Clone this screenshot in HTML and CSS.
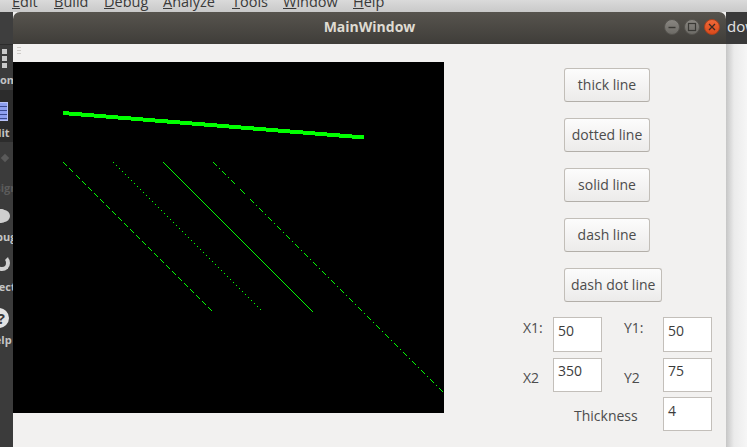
FILE: index.html
```html
<!DOCTYPE html>
<html>
<head>
<meta charset="utf-8">
<title>MainWindow</title>
<link rel="stylesheet" href="styles.css">
</head>
<body>
<div class="menubar">
  <span class="mi w-edit"><u>E</u>dit</span>
  <span class="mi w-build"><u>B</u>uild</span>
  <span class="mi w-debug"><u>D</u>ebug</span>
  <span class="mi w-analyze"><u>A</u>nalyze</span>
  <span class="mi w-tools"><u>T</u>ools</span>
  <span class="mi w-window"><u>W</u>indow</span>
  <span class="mi"><u>H</u>elp</span>
</div>
<div class="main">
  <div class="strip">
    <div class="strip-top"></div>
    <div class="sq sq-first"></div>
    <div class="sq"></div>
    <div class="sq"></div>
    <div class="mlbl lbl-welcome">Welcome</div>
    <div class="sel">
      <div class="edit-icon"></div>
      <div class="mlbl lbl-edit">Edit</div>
    </div>
    <div class="diamond"></div>
    <div class="mlbl dim lbl-design">Design</div>
    <div class="bug"></div>
    <div class="mlbl lbl-debug">Debug</div>
    <div class="wrench"></div>
    <div class="mlbl lbl-projects">Projects</div>
    <div class="help-ico">?</div>
    <div class="mlbl lbl-help">Help</div>
  </div>
  <div class="window">
    <div class="titlebar">
      <div></div>
      <div class="title">MainWindow</div>
      <div class="wbtns">
        <svg width="56" height="16" viewBox="0 0 56 16">
          <defs>
            <linearGradient id="gg" x1="0" y1="0" x2="0" y2="1">
              <stop offset="0" stop-color="#8a8782"/>
              <stop offset="1" stop-color="#6c6a65"/>
            </linearGradient>
            <linearGradient id="og" x1="0" y1="0" x2="0" y2="1">
              <stop offset="0" stop-color="#f06a3a"/>
              <stop offset="1" stop-color="#d9491a"/>
            </linearGradient>
          </defs>
          <circle cx="8" cy="8" r="7.5" fill="url(#gg)" stroke="#55534e" stroke-width="1"/>
          <line x1="4.5" y1="8.5" x2="11.5" y2="8.5" stroke="#3a3935" stroke-width="1.4"/>
          <circle cx="28" cy="8" r="7.5" fill="url(#gg)" stroke="#55534e" stroke-width="1"/>
          <rect x="24.5" y="4.5" width="7" height="7" fill="none" stroke="#3a3935" stroke-width="1.2"/>
          <circle cx="48" cy="8" r="7.5" fill="url(#og)" stroke="#a8401c" stroke-width="1"/>
          <path d="M45 5 L51 11 M51 5 L45 11" stroke="#3a2a22" stroke-width="1.3"/>
        </svg>
      </div>
    </div>
    <div class="body">
      <div class="toolbar"><div class="grip"></div></div>
      <div class="row">
        <svg class="canvas" width="431" height="351" viewBox="0 0 431 351">
          <rect width="431" height="351" fill="#000"/>
          <line x1="50" y1="51" x2="351" y2="75.5" stroke="#00ff00" stroke-width="4" shape-rendering="crispEdges"/>
          <g stroke="#00ff00" stroke-width="1" shape-rendering="crispEdges" fill="none">
            <line x1="50.5" y1="100.5" x2="200.5" y2="250.5" stroke-dasharray="5.66 2.83"/>
            <line x1="100.5" y1="100.5" x2="250.5" y2="250.5" stroke-dasharray="1.41 2.83"/>
            <line x1="150.5" y1="100.5" x2="300.5" y2="250.5"/>
            <line x1="200.5" y1="100.5" x2="500.5" y2="400.5" stroke-dasharray="5.66 2.83 1.41 2.83"/>
          </g>
        </svg>
        <div class="panel">
          <button class="btn">thick line</button>
          <button class="btn">dotted line</button>
          <button class="btn">solid line</button>
          <button class="btn">dash line</button>
          <button class="btn">dash dot line</button>
          <div class="form">
            <div class="lab lab-r1">X1:</div>
            <div class="inp">50</div>
            <div class="lab lab-r1 lab-y">Y1:</div>
            <div class="inp">50</div>
            <div class="lab lab-r2">X2</div>
            <div class="inp">350</div>
            <div class="lab lab-r2 lab-y">Y2</div>
            <div class="inp">75</div>
            <div class="lab lab-thick">Thickness</div>
            <div class="inp inp-thick">4</div>
          </div>
        </div>
      </div>
    </div>
  </div>
  <div class="side">
    <div class="side-top">dow</div>
    <div class="side-rest"></div>
  </div>
</div>
</body>
</html>
```
FILE: styles.css
```css
* { box-sizing: border-box; }
html, body {
  margin: 0;
  padding: 0;
  width: 747px;
  height: 447px;
  overflow: hidden;
  background: #f2f1f0;
  font-family: "Open Sans", "DejaVu Sans", sans-serif;
}

/* top menu bar of the background app */
.menubar {
  height: 12px;
  overflow: hidden;
  display: flex;
  padding-left: 12px;
  background: linear-gradient(#dadada, #c9c9c9);
  color: #3a3a3a;
  font-size: 14.5px;
  line-height: 16px;
}
.mi { display: block; margin-top: -6px; white-space: nowrap; flex: none; }
.mi u { text-underline-offset: 1px; }
.w-edit { width: 42px; }
.w-build { width: 50px; }
.w-debug { width: 59px; }
.w-analyze { width: 69px; }
.w-tools { width: 51px; }
.w-window { width: 70px; }

.main { display: flex; height: 435px; }

/* left mode strip */
.strip {
  width: 13px;
  flex: none;
  background: #3b3b3b;
  overflow: hidden;
  display: flex;
  flex-direction: column;
}
.strip > * { flex: none; }
.strip-top { height: 33px; background: #3e3e3e; border-bottom: 1px solid #2c2c2c; }
.sq { width: 5px; height: 5px; background: #c9c9c9; margin: 0 0 2px 2px; }
.sq-first { margin-top: 4px; }
.mlbl {
  width: 80px;
  margin-left: -41px;
  text-align: center;
  font-size: 11px;
  font-weight: bold;
  line-height: 12px;
  height: 12px;
  color: #c4c4c4;
  white-space: nowrap;
}
.mlbl.dim { color: #5c5c5c; }
.lbl-welcome { margin-top: 4px; }
.sel { height: 52px; margin-top: 4px; background: #2c2c2c; padding-top: 12px; }
.edit-icon {
  width: 8px;
  height: 19px;
  background: repeating-linear-gradient(#8d9ff0 0, #8d9ff0 3px, #3a4a90 3px, #3a4a90 4px);
  border: 1px solid #b8c2f7;
  border-left: none;
}
.lbl-edit { margin-top: 6px; }
.diamond {
  width: 6px;
  height: 6px;
  margin: 13px 0 0 2px;
  background: #5a5a5a;
  transform: rotate(45deg);
}
.lbl-design { margin-top: 21px; }
.bug {
  width: 14px;
  height: 14px;
  margin: 15px 0 0 -6px;
  border-radius: 50%;
  background: #cfcfcf;
  box-shadow: 0 -4px 0 -4px #cfcfcf, 3px 0 0 -1px #cfcfcf;
}
.lbl-debug { margin-top: 8px; }
.wrench {
  width: 16px;
  height: 16px;
  margin: 12px 0 0 -6px;
  border-radius: 50%;
  border: 4px solid #d0d0d0;
  border-top-color: transparent;
}
.lbl-projects { margin-top: 10px; }
.help-ico {
  width: 20px;
  height: 20px;
  margin: 15px 0 0 -11px;
  border-radius: 50%;
  background: #e2e2e2;
  color: #3b3b3b;
  font-size: 15px;
  font-weight: bold;
  line-height: 20px;
  text-align: right;
  padding-right: 4px;
}
.lbl-help { margin-top: 6px; }

/* the application window */
.window {
  width: 713px;
  flex: none;
  display: flex;
  flex-direction: column;
}
.titlebar {
  height: 32px;
  flex: none;
  border-radius: 7px 7px 0 0;
  background: linear-gradient(#57544e, #3f3d39);
  display: grid;
  grid-template-columns: 1fr auto 1fr;
  align-items: center;
}
.title {
  color: #dfdbd2;
  font-weight: bold;
  font-size: 14px;
  line-height: 30px;
  height: 32px;
}
.wbtns { justify-self: end; padding-right: 6px; height: 16px; margin-top: -2px; }
.wbtns svg { display: block; }

.body { flex: 1; background: #f2f1f0; display: flex; flex-direction: column; }
.toolbar { height: 18px; flex: none; padding: 3px 0 0 4px; }
.grip {
  width: 4px;
  height: 7px;
  background: repeating-linear-gradient(#cfccc8 0, #cfccc8 1px, transparent 1px, transparent 3px);
}
.row { display: flex; align-items: flex-start; }
.canvas { display: block; flex: none; }

.panel {
  width: 282px;
  flex: none;
  padding: 6px 0 0 79px;
  display: flex;
  flex-direction: column;
  align-items: flex-start;
  gap: 16px;
}
.btn {
  margin: 0 0 0 41px;
  min-width: 86px;
  height: 34px;
  padding: 0 6px;
  border: 1px solid #c2beb8;
  border-bottom-color: #b3afa9;
  border-radius: 3px;
  background: linear-gradient(#fcfcfc, #ecebea);
  color: #4c4c4c;
  font-family: "Open Sans", "DejaVu Sans", sans-serif;
  font-size: 14px;
  line-height: 32px;
  white-space: nowrap;
}

.form {
  margin-top: -1px;
  display: grid;
  grid-template-columns: 30px 49px 61px 49px;
  grid-template-rows: 35px 34px 34px;
  row-gap: 5.5px;
  font-size: 14px;
  line-height: 16px;
}
.lab { color: #4c4c4c; white-space: nowrap; }
.lab-y { padding-left: 22px; }
.lab-r1 { padding-top: 3px; }
.lab-r2 { padding-top: 12px; }
.lab-thick { grid-column: 2 / 4; padding: 11px 0 0 21px; }
.inp {
  background: #fff;
  border: 1px solid #c3bfba;
  color: #3c3c3c;
  padding: 4.5px 0 0 4px;
}
.inp-thick { grid-column: 4; }

/* area right of the window */
.side { width: 21px; flex: none; display: flex; flex-direction: column; }
.side-top {
  height: 32px;
  background: #3a3a3a;
  color: #e4e4e4;
  font-size: 15px;
  line-height: 28px;
  padding-left: 1px;
  white-space: nowrap;
  overflow: hidden;
}
.side-rest { flex: 1; background: linear-gradient(to right, #c6c6c6, #ebebeb 8px, #f6f6f6); }
```
